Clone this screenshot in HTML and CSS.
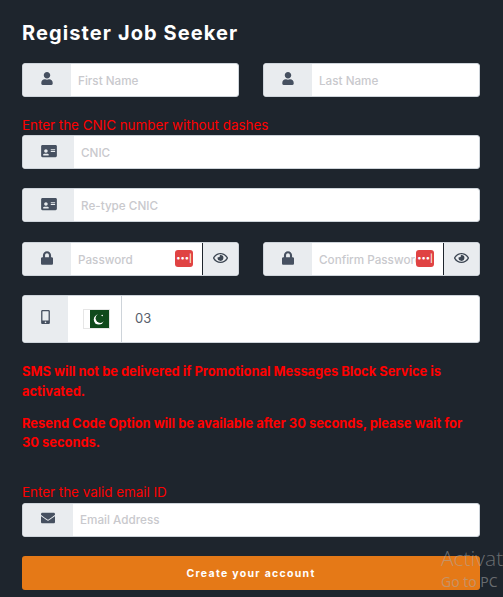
FILE: index.html
```html
<!DOCTYPE html>
<html lang="en">
<head>
<meta charset="utf-8">
<title>Register Job Seeker</title>
<link rel="stylesheet" href="styles.css">
</head>
<body>
<svg class="defs" width="0" height="0" aria-hidden="true">
  <symbol id="i-user" viewBox="0 0 448 512"><path d="M224 256c70.7 0 128-57.3 128-128S294.7 0 224 0 96 57.3 96 128s57.3 128 128 128zm89.6 32h-16.7c-22.2 10.2-46.9 16-72.9 16s-50.6-5.8-72.9-16h-16.7C60.2 288 0 348.2 0 422.4V464c0 26.5 21.5 48 48 48h352c26.5 0 48-21.5 48-48v-41.6c0-74.2-60.2-134.4-134.4-134.4z"/></symbol>
  <symbol id="i-card" viewBox="0 0 576 512"><path d="M528 32H48C21.5 32 0 53.5 0 80v352c0 26.5 21.5 48 48 48h480c26.5 0 48-21.5 48-48V80c0-26.5-21.5-48-48-48zM352 200c0-4.4 3.6-8 8-8h144c4.4 0 8 3.6 8 8v16c0 4.4-3.6 8-8 8H360c-4.4 0-8-3.6-8-8v-16zm0 64c0-4.4 3.6-8 8-8h144c4.4 0 8 3.6 8 8v16c0 4.4-3.6 8-8 8H360c-4.4 0-8-3.6-8-8v-16zM176 192c35.3 0 64 28.7 64 64s-28.7 64-64 64-64-28.7-64-64 28.7-64 64-64zM67.1 396.2C75.5 370.5 99.6 352 128 352h8.2c12.3 5.1 25.7 8 39.8 8s27.6-2.9 39.8-8h8.2c28.4 0 52.5 18.5 60.9 44.2 3.2 9.9-5.2 19.8-15.6 19.8H82.7c-10.4 0-18.8-10-15.6-19.8z"/></symbol>
  <symbol id="i-lock" viewBox="0 0 448 512"><path d="M400 224h-24v-72C376 68.2 307.8 0 224 0S72 68.2 72 152v72H48c-26.5 0-48 21.5-48 48v192c0 26.5 21.5 48 48 48h352c26.5 0 48-21.5 48-48V272c0-26.5-21.5-48-48-48zm-104 0H152v-72c0-39.7 32.3-72 72-72s72 32.3 72 72v72z"/></symbol>
  <symbol id="i-eye" viewBox="0 0 576 512"><path d="M288 144a110.94 110.94 0 0 0-31.24 5 55.4 55.4 0 0 1 7.24 27 56 56 0 0 1-56 56 55.4 55.4 0 0 1-27-7.24A111.71 111.71 0 1 0 288 144zm284.52 97.4C518.29 135.59 410.93 64 288 64S57.68 135.64 3.48 241.41a32.35 32.35 0 0 0 0 29.19C57.71 376.41 165.07 448 288 448s230.32-71.64 284.52-177.41a32.35 32.35 0 0 0 0-29.19zM288 400c-98.65 0-189.09-55-237.93-144C98.91 167 189.34 112 288 112s189.09 55 237.93 144C477.1 345 386.66 400 288 400z"/></symbol>
  <symbol id="i-mobile" viewBox="0 0 320 512"><path d="M272 0H48C21.5 0 0 21.5 0 48v416c0 26.5 21.5 48 48 48h224c26.5 0 48-21.5 48-48V48c0-26.5-21.5-48-48-48zM160 480c-17.7 0-32-14.3-32-32s14.3-32 32-32 32 14.3 32 32-14.3 32-32 32zm112-108c0 6.6-5.4 12-12 12H60c-6.6 0-12-5.4-12-12V60c0-6.6 5.4-12 12-12h200c6.6 0 12 5.4 12 12v312z"/></symbol>
  <symbol id="i-mail" viewBox="0 0 512 512"><path d="M502.3 190.8c3.9-3.1 9.7-.2 9.7 4.7V400c0 26.5-21.5 48-48 48H48c-26.5 0-48-21.5-48-48V195.6c0-5 5.7-7.8 9.7-4.7 22.4 17.4 52.1 39.5 154.1 113.6 21.1 15.4 56.7 47.8 92.2 47.6 35.7.3 72-32.8 92.3-47.6 102-74.1 131.6-96.3 154-113.7zM256 320c23.2.4 56.6-29.2 73.4-41.4 132.7-96.3 142.8-104.7 173.4-128.7 5.8-4.5 9.2-11.5 9.2-18.9v-19c0-26.5-21.5-48-48-48H48C21.5 64 0 85.5 0 112v19c0 7.4 3.4 14.3 9.2 18.9 30.6 23.9 40.7 32.4 173.4 128.7 16.8 12.2 50.2 41.8 73.4 41.4z"/></symbol>
</svg>

<main class="page">
  <h1 class="title">Register Job Seeker</h1>

  <div class="row-2">
    <div class="group">
      <span class="addon addon-md"><svg class="ic ic-user"><use href="#i-user"/></svg></span>
      <span class="field">First Name</span>
    </div>
    <div class="group">
      <span class="addon addon-md"><svg class="ic ic-user"><use href="#i-user"/></svg></span>
      <span class="field">Last Name</span>
    </div>
  </div>

  <p class="hint hint-cnic">Enter the CNIC number without dashes</p>
  <div class="group">
    <span class="addon addon-lg"><svg class="ic ic-card"><use href="#i-card"/></svg></span>
    <span class="field">CNIC</span>
  </div>

  <div class="group gap-top">
    <span class="addon addon-lg"><svg class="ic ic-card"><use href="#i-card"/></svg></span>
    <span class="field">Re-type CNIC</span>
  </div>

  <div class="row-2 gap-top-pw">
    <div class="group">
      <span class="addon addon-md"><svg class="ic ic-lock"><use href="#i-lock"/></svg></span>
      <span class="field field-pw">Password<span class="pm">•••|</span></span>
      <span class="eye"><svg class="ic ic-eye"><use href="#i-eye"/></svg></span>
    </div>
    <div class="group">
      <span class="addon addon-md"><svg class="ic ic-lock"><use href="#i-lock"/></svg></span>
      <span class="field field-pw"><span class="clip">Confirm Password</span><span class="pm">•••|</span></span>
      <span class="eye"><svg class="ic ic-eye"><use href="#i-eye"/></svg></span>
    </div>
  </div>

  <div class="group group-phone gap-top">
    <span class="addon addon-sm"><svg class="ic ic-mobile"><use href="#i-mobile"/></svg></span>
    <span class="flag-box">
      <svg class="flag" viewBox="0 0 27 20" aria-label="Pakistan flag">
        <rect width="27" height="20" fill="#fff"/>
        <rect x="7" width="20" height="20" fill="#0f4a1c"/>
        <circle cx="15.8" cy="10.6" r="5" fill="#fff"/>
        <circle cx="17.3" cy="9.2" r="4.7" fill="#0f4a1c"/>
        <circle cx="19.2" cy="6.5" r="0.8" fill="#fff"/>
      </svg>
    </span>
    <span class="field field-phone">03</span>
  </div>

  <div class="notes">
    <p class="note">SMS will not be delivered if Promotional Messages Block Service is activated.</p>
    <p class="note">Resend Code Option will be available after 30 seconds, please wait for 30 seconds.</p>
  </div>

  <p class="hint hint-email">Enter the valid email ID</p>
  <div class="group">
    <span class="addon addon-mail"><svg class="ic ic-mail"><use href="#i-mail"/></svg></span>
    <span class="field">Email Address</span>
  </div>

  <button class="submit" type="button">Create your account</button>
</main>

<div class="activate">
  <div class="activate-big">Activate</div>
  <div class="activate-small">Go to PC</div>
</div>
</body>
</html>
```

FILE: styles.css
```css
* { box-sizing: border-box; }
html, body { margin: 0; height: 597px; overflow: hidden; }
body {
  position: relative;
  background: #1e252d;
  font-family: "Inter", "Liberation Sans", sans-serif;
}
.defs { position: absolute; }
.page { padding: 20px 23px 0 22px; }
.title {
  margin: 0 0 19px;
  height: 24px;
  line-height: 26px;
  font-size: 20px;
  font-weight: 700;
  letter-spacing: 1.1px;
  color: #fff;
}
.row-2 { display: grid; grid-template-columns: 217px 217px; column-gap: 24px; }
.group {
  display: flex;
  height: 34px;
  background: #fff;
  border: 1px solid #ced4da;
  border-radius: 3px;
  overflow: hidden;
}
.addon {
  flex: none;
  display: flex;
  align-items: center;
  justify-content: center;
  padding-bottom: 3px;
  background: #e9ecef;
  color: #495057;
}
.addon-md { width: 48px; }
.addon-lg { width: 51px; padding-left: 1px; padding-bottom: 2px; }
.addon-sm { width: 45px; padding-bottom: 4px; }
.addon-mail { width: 50px; padding-bottom: 4px; }
.ic { display: block; fill: #465060; }
.ic-user { width: 12px; height: 13px; }
.ic-card { width: 16px; height: 14px; }
.ic-lock { width: 12px; height: 14px; }
.ic-eye { width: 15px; height: 14px; fill: #3c4652; }
.ic-mobile { width: 9px; height: 14px; }
.ic-mail { width: 14px; height: 14px; }
.field {
  position: relative;
  flex: 1;
  min-width: 0;
  display: flex;
  align-items: center;
  padding: 1px 0 0 7px;
  font-size: 11.7px;
  font-weight: 500;
  color: #c9c9cd;
  white-space: nowrap;
}
.clip { display: block; width: 100px; overflow: hidden; }
.pm {
  position: absolute;
  right: 9px;
  top: 7px;
  width: 18px;
  height: 17px;
  border-radius: 3px;
  background: #e04343;
  color: #fff;
  font-size: 8px;
  line-height: 17px;
  text-align: center;
}
.eye {
  flex: none;
  width: 36px;
  display: flex;
  align-items: center;
  justify-content: center;
  background: #e9ecef;
  border-left: 1px solid #1e252d;
  padding-bottom: 3px;
}
.hint { margin: 0; height: 21px; line-height: 20px; font-size: 13.4px; color: #f00; }
.hint-cnic { margin-top: 18px; height: 20px; line-height: 21px; }
.hint-email { margin-top: 29px; }
.gap-top { margin-top: 19px; }
.gap-top-pw { margin-top: 20px; }
.group-phone { height: 48px; }
.flag-box {
  flex: none;
  width: 54px;
  display: flex;
  align-items: center;
  justify-content: flex-end;
  padding: 0 11px 0 0;
  border-right: 1px solid #ced4da;
}
.flag { display: block; width: 27px; height: 20px; outline: 1px solid #e6e6e6; outline-offset: -1px; }
.field-phone { padding: 0 0 2px 13px; font-size: 13px; font-weight: 400; color: #56606c; }
.notes { margin-top: 19px; }
.note {
  margin: 0 0 12.5px;
  font-size: 12.9px;
  line-height: 19.5px;
  font-weight: 700;
  color: #f00;
}
.submit {
  display: block;
  width: 458px;
  height: 34px;
  margin-top: 19px;
  padding: 2px 0 0;
  border: 0;
  border-radius: 3px;
  background: #e57917;
  color: #fff;
  font: 700 10.5px "Inter", "Liberation Sans", sans-serif;
  letter-spacing: 1.3px;
}
.activate {
  position: absolute;
  left: 441px;
  top: 545px;
  font-family: "Open Sans", sans-serif;
  color: rgba(170, 170, 170, 0.55);
  white-space: nowrap;
}
.activate-big { font-size: 21px; line-height: 26px; font-weight: 300; }
.activate-small { font-size: 14px; line-height: 20px; margin-top: 1px; }
```
